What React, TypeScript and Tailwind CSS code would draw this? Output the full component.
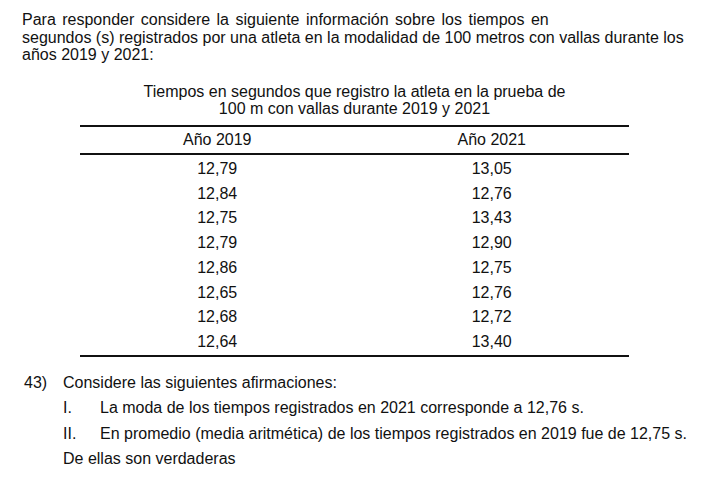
const rows: [string, string][] = [
  ['12,79', '13,05'],
  ['12,84', '12,76'],
  ['12,75', '13,43'],
  ['12,79', '12,90'],
  ['12,86', '12,75'],
  ['12,65', '12,76'],
  ['12,68', '12,72'],
  ['12,64', '13,40'],
];

const App = () => {
  return (
    <div className="w-[715px] h-[478px] overflow-hidden bg-white text-[#111] text-[16px] font-['Liberation_Sans',Arial,sans-serif]">
      {/* Intro */}
      <div className="pl-[22px] pt-[11px] leading-[17.5px]">
        <p className="[word-spacing:2px]">
          Para responder considere la siguiente información sobre los tiempos en
        </p>
        <p>
          segundos (s) registrados por una atleta en la modalidad de 100 metros con vallas durante los
        </p>
        <p>años 2019 y 2021:</p>
      </div>

      {/* Table */}
      <div className="ml-[80px] w-[549px] mt-[19px]">
        <div className="text-center leading-[17px]">
          <p>Tiempos en segundos que registro la atleta en la prueba de</p>
          <p>100 m con vallas durante 2019 y 2021</p>
        </div>
        <div className="mt-[8px] border-t-2 border-b-2 border-[#111]">
          <div className="grid grid-cols-2 h-[28px] items-center text-center border-b-2 border-[#111]">
            <span>Año 2019</span>
            <span>Año 2021</span>
          </div>
          <div className="pt-[2px]">
            {rows.map(([a, b], i) => (
              <div key={i} className="grid grid-cols-2 h-[24.75px] items-center text-center">
                <span>{a}</span>
                <span>{b}</span>
              </div>
            ))}
          </div>
        </div>
      </div>

      {/* Question */}
      <div className="mt-[13px] pl-[24px] leading-[25.6px]">
        <div className="flex">
          <span className="w-[39px]">43)</span>
          <span>Considere las siguientes afirmaciones:</span>
        </div>
        <div className="flex pl-[39px]">
          <span className="w-[37px]">I.</span>
          <span>La moda de los tiempos registrados en 2021 corresponde a 12,76 s.</span>
        </div>
        <div className="flex pl-[39px]">
          <span className="w-[37px]">II.</span>
          <span>En promedio (media aritmética) de los tiempos registrados en 2019 fue de 12,75 s.</span>
        </div>
        <div className="pl-[39px]">De ellas son verdaderas</div>
      </div>
    </div>
  );
};

export default App;
